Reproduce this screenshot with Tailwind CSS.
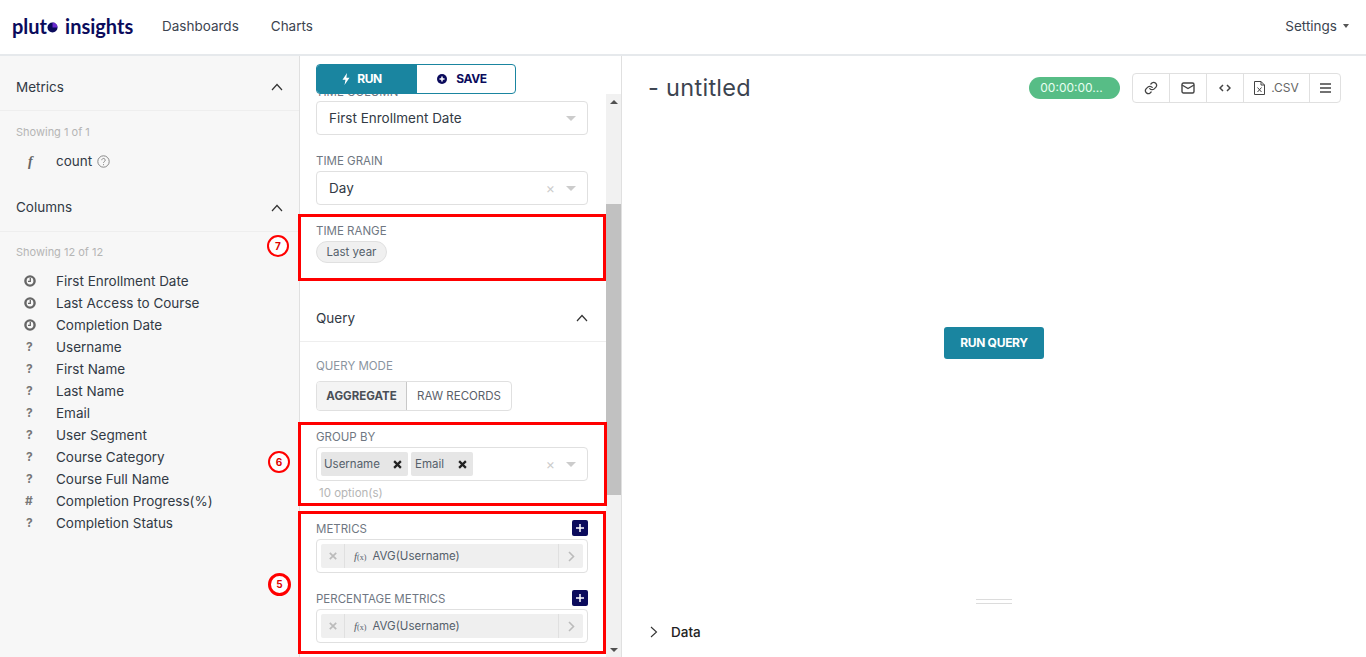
<!DOCTYPE html>
<html lang="en">
<head>
    <meta charset="UTF-8">
    <meta name="viewport" content="width=device-width, initial-scale=1">
    <title>Pluto Insights - Explore</title>
    <script src="https://cdn.jsdelivr.net/npm/@tailwindcss/browser@4"></script>
</head>
<body class="relative h-[657px] w-[1366px] overflow-hidden bg-white font-['Inter','Lato',sans-serif] text-[#323a45]">
    <!-- top nav -->
    <header class="flex h-[56px] items-center border-b-2 border-[#e6e9ec] pb-[2px] pl-3 pr-[17px]">
        <div class="flex w-[150px] items-center text-[20px] leading-none font-bold text-[#0b0b5c] font-['Lato',sans-serif]">
            <span>plut</span>
            <svg class="mt-[2px]" width="11" height="11" viewBox="0 0 11 11"><circle cx="5.5" cy="5.5" r="5" fill="#0b0b5c"/><path d="M5.5 5.5V.5A5 5 0 0 1 10.5 5.5Z" fill="#6a2bd0"/></svg>
            <span class="ml-[7px]">insights</span>
        </div>
        <nav class="flex gap-8 text-[13.5px] text-[#3c4450]">
            <a>Dashboards</a>
            <a>Charts</a>
        </nav>
        <div class="ml-auto flex items-center gap-[6px] text-[13.5px] text-[#3c4450]">
            Settings
            <span class="h-0 w-0 border-x-[3px] border-t-[4px] border-x-transparent border-t-[#555]"></span>
        </div>
    </header>

    <main class="flex h-[601px]">
        <!-- datasource sidebar -->
        <aside class="w-[300px] shrink-0 border-r border-[#e0e0e0] bg-[#f7f7f7] text-[13.5px]">
            <div class="flex h-[55px] items-center justify-between border-b border-[#eeeeee] pl-4 pr-4 pt-[8px]">
                <span>Metrics</span>
                <svg width="12" height="8" viewBox="0 0 12 8" fill="none" stroke="#333" stroke-width="1.2"><path d="M1 7l5-5.5L11 7"/></svg>
            </div>
            <p class="mt-[13px] pl-4 text-[11px] leading-[16px] text-[#b5b5b5]">Showing 1 of 1</p>
            <div class="mt-[10px] flex h-[22px] items-center">
                <span class="w-[56px] pl-[28px] font-['Liberation_Serif',serif] text-[14px] font-bold italic text-[#666]">f</span>
                <span>count</span>
                <svg class="ml-[5px]" width="13" height="13" viewBox="0 0 13 13" fill="none" stroke="#888"><circle cx="6.5" cy="6.5" r="5.7"/><path d="M4.8 5.2a1.7 1.7 0 1 1 2.6 1.4c-.6.4-.9.7-.9 1.3M6.5 9.2v1"/></svg>
            </div>
            <div class="mt-[13px] flex h-[47px] items-center justify-between border-b border-[#eeeeee] px-4 pb-[1px]">
                <span>Columns</span>
                <svg width="12" height="8" viewBox="0 0 12 8" fill="none" stroke="#333" stroke-width="1.2"><path d="M1 7l5-5.5L11 7"/></svg>
            </div>
            <p class="mt-[12px] pl-4 text-[11px] leading-[16px] text-[#b5b5b5]">Showing 12 of 12</p>
            <ul class="mt-[10px] leading-[22px]">
                <li class="flex h-[22px] items-center">
                    <span class="flex w-[56px] pl-[24px]"><svg width="12" height="12" viewBox="0 0 12 12" fill="none" stroke="#666" stroke-width="2.4"><circle cx="6" cy="6" r="4.6"/><path stroke-width="1.3" d="M6.3 3v3.3H4"/></svg></span>First Enrollment Date
                </li>
                <li class="flex h-[22px] items-center">
                    <span class="flex w-[56px] pl-[24px]"><svg width="12" height="12" viewBox="0 0 12 12" fill="none" stroke="#666" stroke-width="2.4"><circle cx="6" cy="6" r="4.6"/><path stroke-width="1.3" d="M6.3 3v3.3H4"/></svg></span>Last Access to Course
                </li>
                <li class="flex h-[22px] items-center">
                    <span class="flex w-[56px] pl-[24px]"><svg width="12" height="12" viewBox="0 0 12 12" fill="none" stroke="#666" stroke-width="2.4"><circle cx="6" cy="6" r="4.6"/><path stroke-width="1.3" d="M6.3 3v3.3H4"/></svg></span>Completion Date
                </li>
                <li class="flex h-[22px] items-center"><span class="w-[56px] pl-[26px] text-[12px] font-bold text-[#777]">?</span>Username</li>
                <li class="flex h-[22px] items-center"><span class="w-[56px] pl-[26px] text-[12px] font-bold text-[#777]">?</span>First Name</li>
                <li class="flex h-[22px] items-center"><span class="w-[56px] pl-[26px] text-[12px] font-bold text-[#777]">?</span>Last Name</li>
                <li class="flex h-[22px] items-center"><span class="w-[56px] pl-[26px] text-[12px] font-bold text-[#777]">?</span>Email</li>
                <li class="flex h-[22px] items-center"><span class="w-[56px] pl-[26px] text-[12px] font-bold text-[#777]">?</span>User Segment</li>
                <li class="flex h-[22px] items-center"><span class="w-[56px] pl-[26px] text-[12px] font-bold text-[#777]">?</span>Course Category</li>
                <li class="flex h-[22px] items-center"><span class="w-[56px] pl-[26px] text-[12px] font-bold text-[#777]">?</span>Course Full Name</li>
                <li class="flex h-[22px] items-center"><span class="w-[56px] pl-[25px] text-[12px] font-bold text-[#777]">#</span>Completion Progress(%)</li>
                <li class="flex h-[22px] items-center"><span class="w-[56px] pl-[26px] text-[12px] font-bold text-[#777]">?</span>Completion Status</li>
            </ul>
        </aside>

        <!-- controls panel -->
        <section class="flex w-[322px] shrink-0 flex-col border-r border-[#e0e0e0]">
            <div class="relative z-10 h-[38px] shrink-0 bg-white pl-4 pt-[8px]">
                <div class="flex h-[30px] w-[200px] overflow-hidden rounded-[4px] border border-[#1a85a0] text-[12px] font-bold tracking-[-0.4px]">
                    <div class="flex w-[100px] items-center justify-center gap-[7px] bg-[#1a85a0] pr-[10px] text-white">
                        <svg width="8" height="12" viewBox="0 0 8 12" fill="#fff"><path d="M5 0L.5 6.8h3L2.5 12 7.5 4.700H4.400z"/></svg>
                        RUN
                    </div>
                    <div class="flex flex-1 items-center justify-center gap-[9px] pr-[8px] text-[#0b0b5c]">
                        <svg width="10" height="10" viewBox="0 0 10 10"><circle cx="5" cy="5" r="5" fill="#0b0b5c"/><path d="M5 2.5v5M2.5 5h5" stroke="#fff" stroke-width="1.5"/></svg>
                        SAVE
                    </div>
                </div>
            </div>
            <div class="flex min-h-0 flex-1">
                <div class="w-[306px] overflow-hidden">
                    <div class="-mt-[14px] pl-4 pr-[18px] text-[11.5px] text-[#6f7782]">
                        <div class="h-[21px] leading-[24px]">TIME COLUMN</div>
                        <div class="flex h-[34px] items-center justify-between rounded-[4px] border border-[#e0e0e0] pl-3 pr-[11px] text-[13.5px] text-[#323a45]">
                            First Enrollment Date
                            <span class="h-0 w-0 border-x-[5px] border-t-[5px] border-x-transparent border-t-[#ccc]"></span>
                        </div>
                        <div class="mt-[16px] h-[20px] leading-[21px]">TIME GRAIN</div>
                        <div class="flex h-[34px] items-center rounded-[4px] border border-[#e0e0e0] pl-3 pr-[11px] text-[13.5px] text-[#323a45]">
                            Day
                            <span class="ml-auto mr-[11px] -translate-y-[1px] text-[14px] text-[#ccc]">×</span>
                            <span class="h-0 w-0 border-x-[5px] border-t-[5px] border-x-transparent border-t-[#ccc]"></span>
                        </div>
                        <div class="mt-[16px] h-[20px] leading-[21px]">TIME RANGE</div>
                        <div class="flex h-[22px] w-[71px] items-center justify-center rounded-full border border-[#e0e0e0] bg-[#f0f0f0] pt-[1px] text-[11.5px] text-[#55606b]">Last year</div>
                    </div>
                    <div class="mt-[33px] flex h-[46px] items-center justify-between border-b border-[#eeeeee] pl-4 pr-[18px] pb-[1px] text-[13.5px]">
                        Query
                        <svg width="12" height="8" viewBox="0 0 12 8" fill="none" stroke="#333" stroke-width="1.2"><path d="M1 7l5-5.5L11 7"/></svg>
                    </div>
                    <div class="pl-4 pr-[18px] pt-[14px] text-[11.5px] text-[#6f7782]">
                        <div class="h-[20px] leading-[21px] text-[#8a94a0]">QUERY MODE</div>
                        <div class="mt-[5px] flex h-[30px] w-[196px] overflow-hidden rounded-[4px] border border-[#e0e0e0]">
                            <div class="flex w-[90px] items-center justify-center border-r border-[#c8c8c8] bg-[#f4f4f4] pt-[1px] font-bold text-[#4a4f57]">AGGREGATE</div>
                            <div class="flex flex-1 items-center justify-center pt-[1px] text-[#5a6069]">RAW RECORDS</div>
                        </div>
                        <div class="mt-[16px] h-[20px] leading-[21px]">GROUP BY</div>
                        <div class="flex h-[34px] items-center rounded-[4px] border border-[#e0e0e0] pl-1 pr-[11px] text-[#55606b]">
                            <span class="flex h-[24px] w-[87px] items-center justify-between rounded-[2px] bg-[#e6e6e6] pl-[3px] pr-[6px] pt-[1px]">Username<svg width="9" height="9" viewBox="0 0 8 8" stroke="#222" stroke-width="2"><path d="M1 1l6 6M7 1L1 7"/></svg></span>
                            <span class="ml-[3px] flex h-[24px] w-[62px] items-center justify-between rounded-[2px] bg-[#e6e6e6] pl-[4px] pr-[6px] pt-[1px]">Email<svg width="9" height="9" viewBox="0 0 8 8" stroke="#222" stroke-width="2"><path d="M1 1l6 6M7 1L1 7"/></svg></span>
                            <span class="ml-auto mr-[11px] -translate-y-[1px] text-[14px] text-[#ccc]">×</span>
                            <span class="h-0 w-0 border-x-[5px] border-t-[5px] border-x-transparent border-t-[#ccc]"></span>
                        </div>
                        <div class="mt-[4px] h-[16px] pl-[3px] leading-[16px] text-[#b5b5b5]">10 option(s)</div>
                        <div class="mt-[19px] flex h-[19px] items-start justify-between">
                            <span class="leading-[19px]">METRICS</span>
                            <span class="flex h-[16px] w-[16px] items-center justify-center rounded-[2px] bg-[#0b0b5c]"><svg width="8" height="8" viewBox="0 0 8 8" stroke="#fff" stroke-width="1.5"><path d="M4 0v8M0 4h8"/></svg></span>
                        </div>
                        <div class="flex h-[34px] items-center rounded-[4px] border border-[#e0e0e0] px-1 text-[#55606b]">
                            <div class="flex h-[24px] w-full items-center rounded-[2px] bg-[#efefef]">
                                <span class="flex h-full w-[24px] items-center justify-center border-r border-[#e0e0e0]"><svg width="8" height="8" viewBox="0 0 8 8" stroke="#bbb" stroke-width="1.7"><path d="M.8.8l6.4 6.4M7.2.8L.8 7.2"/></svg></span>
                                <span class="ml-[9px] font-['Liberation_Serif',serif] text-[11px] italic">f<span class="not-italic text-[8px]">(x)</span></span>
                                <span class="ml-[6px] pt-[1px]">AVG(Username)</span>
                                <span class="ml-auto flex h-full w-[25px] items-center justify-center border-l border-[#e0e0e0]"><svg width="7" height="11" viewBox="0 0 7 11" fill="none" stroke="#bbb" stroke-width="1.6"><path d="M1 1l4.500 4.500L1 10"/></svg></span>
                            </div>
                        </div>
                        <div class="mt-[17px] flex h-[19px] items-start justify-between">
                            <span class="leading-[19px]">PERCENTAGE METRICS</span>
                            <span class="flex h-[16px] w-[16px] items-center justify-center rounded-[2px] bg-[#0b0b5c]"><svg width="8" height="8" viewBox="0 0 8 8" stroke="#fff" stroke-width="1.5"><path d="M4 0v8M0 4h8"/></svg></span>
                        </div>
                        <div class="flex h-[34px] items-center rounded-[4px] border border-[#e0e0e0] px-1 text-[#55606b]">
                            <div class="flex h-[24px] w-full items-center rounded-[2px] bg-[#efefef]">
                                <span class="flex h-full w-[24px] items-center justify-center border-r border-[#e0e0e0]"><svg width="8" height="8" viewBox="0 0 8 8" stroke="#bbb" stroke-width="1.7"><path d="M.8.8l6.4 6.4M7.2.8L.8 7.2"/></svg></span>
                                <span class="ml-[9px] font-['Liberation_Serif',serif] text-[11px] italic">f<span class="not-italic text-[8px]">(x)</span></span>
                                <span class="ml-[6px] pt-[1px]">AVG(Username)</span>
                                <span class="ml-auto flex h-full w-[25px] items-center justify-center border-l border-[#e0e0e0]"><svg width="7" height="11" viewBox="0 0 7 11" fill="none" stroke="#bbb" stroke-width="1.6"><path d="M1 1l4.500 4.500L1 10"/></svg></span>
                            </div>
                        </div>
                    </div>
                </div>
                <!-- scrollbar -->
                <div class="flex w-[15px] flex-col items-center bg-[#f1f1f1]">
                    <div class="flex h-[15px] shrink-0 items-center justify-center"><span class="h-0 w-0 border-x-[4px] border-b-[4px] border-x-transparent border-b-[#505050]"></span></div>
                    <div class="mt-[95px] h-[291px] w-full bg-[#c1c1c1]"></div>
                    <div class="mt-auto flex h-[15px] shrink-0 items-center justify-center"><span class="h-0 w-0 border-x-[4px] border-t-[4px] border-x-transparent border-t-[#505050]"></span></div>
                </div>
            </div>
        </section>

        <!-- chart area -->
        <section class="flex min-w-0 flex-1 flex-col">
            <div class="flex h-[62px] shrink-0 items-center pl-[26px] pr-[25px] pt-[2px]">
                <h1 class="text-[23.5px] font-normal tracking-[0.3px] text-[#3c4450]">- untitled</h1>
                <span class="ml-auto flex h-[22px] w-[91px] items-center justify-center rounded-full bg-[#57bd86] pr-[6px] text-[12px] text-[#e8fff2]">00:00:00...</span>
                <div class="ml-[12px] flex h-[30px] w-[209px] overflow-hidden rounded-[4px] border border-[#e0e0e0] text-[#555]">
                    <span class="flex w-[37px] items-center justify-center border-r border-[#e0e0e0]"><svg width="14" height="14" viewBox="0 0 24 24" fill="none" stroke="#444" stroke-width="2.2" stroke-linecap="round"><path d="M10 13a5 5 0 0 0 7.5.5l3-3a5 5 0 0 0-7-7l-1.7 1.7"/><path d="M14 11a5 5 0 0 0-7.5-.5l-3 3a5 5 0 0 0 7 7l1.7-1.7"/></svg></span>
                    <span class="flex w-[37px] items-center justify-center border-r border-[#e0e0e0]"><svg width="14" height="12" viewBox="0 0 14 12" fill="none" stroke="#444" stroke-width="1.4"><rect x="1" y="1" width="12" height="10" rx="1.5"/><path d="M1 3l6 3.5L13 3"/></svg></span>
                    <span class="flex w-[37px] items-center justify-center border-r border-[#e0e0e0]"><svg width="12" height="8" viewBox="0 0 12 8" fill="none" stroke="#444" stroke-width="1.5"><path d="M4 1L1 4l3 3M8 1l3 3-3 3"/></svg></span>
                    <span class="flex w-[66px] items-center justify-center gap-[6px] border-r border-[#e0e0e0] text-[12px] text-[#666]"><svg width="11" height="14" viewBox="0 0 11 14" fill="none" stroke="#444"><path d="M.5.5h6.5l3.5 3.5v9.500h-10zM7 .5V4h3.500"/><path d="M3.500 6.500l4 4.500M7.500 6.500l-4 4.500"/></svg>.CSV</span>
                    <span class="flex flex-1 items-center justify-center"><svg width="11" height="10" viewBox="0 0 11 10" stroke="#444" stroke-width="1.6"><path d="M0 1h11M0 5h11M0 9h11"/></svg></span>
                </div>
            </div>
            <div class="flex h-[449px] shrink-0 items-center justify-center">
                <button class="mt-[1px] h-[32px] w-[100px] rounded-[3px] bg-[#1a85a0] text-[12px] font-bold tracking-[-0.3px] text-white">RUN QUERY</button>
            </div>
            <div class="mx-auto mt-[32px] h-[5px] w-[36px] border-y border-[#dcdcdc]"></div>
            <div class="mt-[18px] flex items-center gap-[13px] pl-[28px] text-[13.5px] font-medium text-[#222]">
                <svg width="8" height="12" viewBox="0 0 8 12" fill="none" stroke="#333" stroke-width="1.1"><path d="M1 1l5.5 5L1 11"/></svg>
                Data
            </div>
        </section>
    </main>

    <!-- red annotations -->
    <div class="pointer-events-none absolute left-[298px] top-[214px] h-[67px] w-[308px] border-[3px] border-[#f00]"></div>
    <div class="pointer-events-none absolute left-[298px] top-[422px] h-[84px] w-[309px] border-[3px] border-[#f00]"></div>
    <div class="pointer-events-none absolute left-[298px] top-[511px] h-[143px] w-[308px] border-[3px] border-[#f00]"></div>
    <div class="absolute left-[267px] top-[235px] flex h-[22px] w-[22px] items-center justify-center rounded-full border-2 border-[#f00] bg-white text-[10px] font-bold text-[#d00]">7</div>
    <div class="absolute left-[268px] top-[451px] flex h-[22px] w-[22px] items-center justify-center rounded-full border-2 border-[#f00] bg-white text-[10px] font-bold text-[#d00]">6</div>
    <div class="absolute left-[268px] top-[573px] flex h-[23px] w-[23px] items-center justify-center rounded-full border-[3px] border-[#f00] bg-white text-[10px] font-bold text-[#d00]">5</div>
</body>
</html>
